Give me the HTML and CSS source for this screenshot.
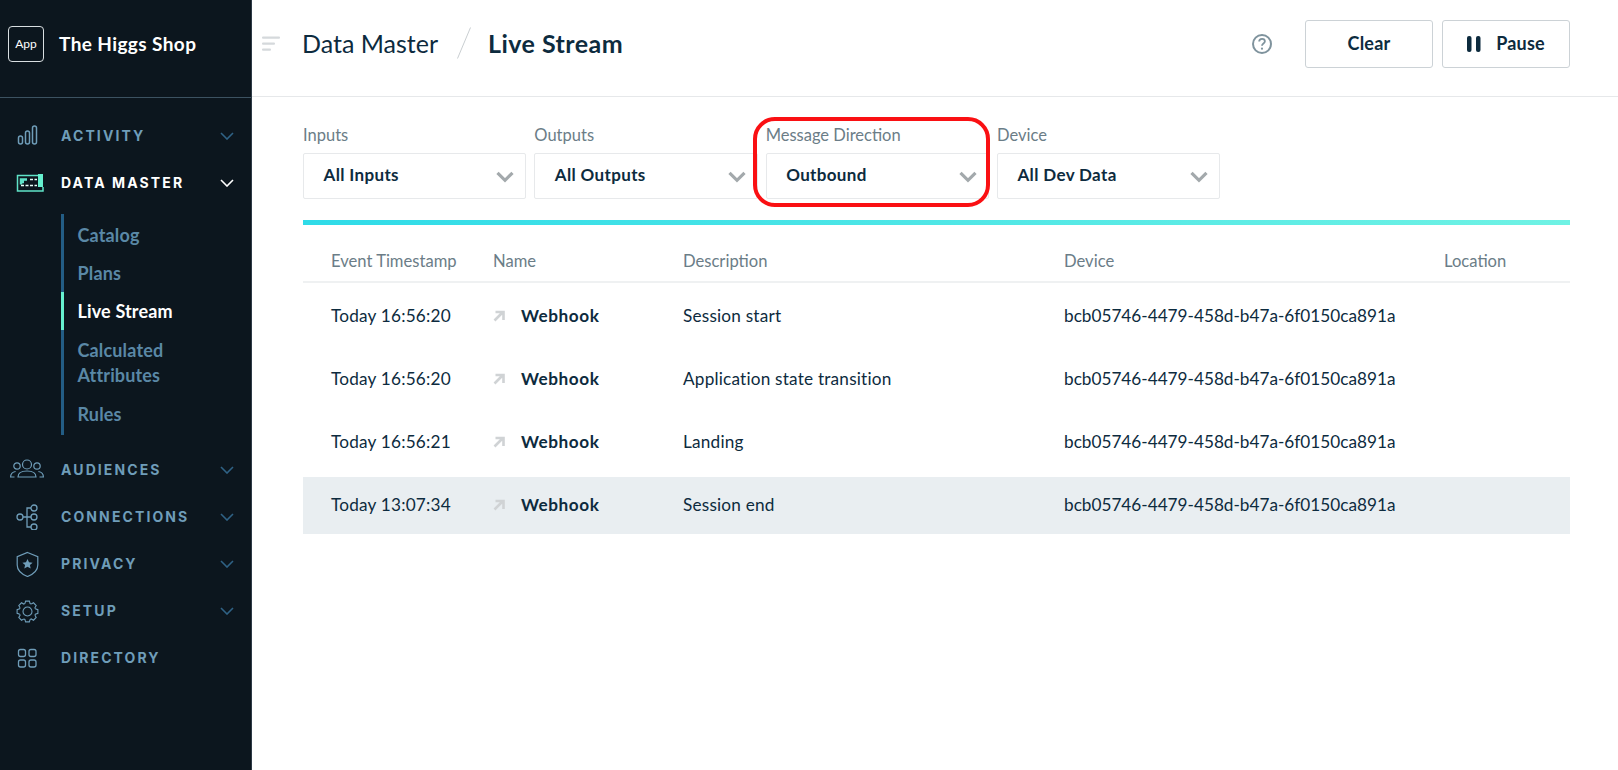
FILE: index.html
```html
<!DOCTYPE html>
<html lang="en">
<head>
  <meta charset="UTF-8">
  <meta name="viewport" content="width=device-width, initial-scale=1.0">
  <title>Live Stream</title>
  <link rel="stylesheet" href="styles.css">
</head>
<body>
  <div class="app">
    <aside class="sidebar">
      <div class="brand">
        <div class="app-badge">App</div>
        <div class="brand-name">The Higgs Shop</div>
      </div>
      <nav class="nav">
        <div class="nav-item">
          <svg class="nav-icon" viewBox="0 0 34 26" fill="none" stroke="currentColor" stroke-width="1.5"><rect x="8.500" y="13" width="4" height="8" rx="2"/><rect x="15.500" y="8" width="4" height="13" rx="2"/><rect x="22.500" y="3" width="4" height="18" rx="2"/></svg>
          <span class="nav-label">ACTIVITY</span>
          <svg class="chevron" viewBox="0 0 14 8" fill="none" stroke="currentColor" stroke-width="1.6"><path d="M1 1l6 6 6-6"/></svg>
        </div>
        <div class="nav-item active">
          <svg class="nav-icon" viewBox="0 0 34 26" fill="none" stroke="#5fe3c8" stroke-width="1.500"><path d="M28 5.500H7.500V21H33v-4"/><rect x="28" y="4" width="5" height="13" fill="#66f0cf" stroke="none"/><path d="M11 14.500V9.500h6M11 12h3" stroke-width="2.500"/><path d="M20 9.500h7M11 15.500h16" stroke="#e8fff9" stroke-dasharray="3 1.500"/></svg>
          <span class="nav-label">DATA MASTER</span>
          <svg class="chevron" viewBox="0 0 14 8" fill="none" stroke="currentColor" stroke-width="1.6"><path d="M1 1l6 6 6-6"/></svg>
        </div>
        <ul class="sub-nav">
          <li>Catalog</li>
          <li>Plans</li>
          <li class="current">Live Stream</li>
          <li class="two-line">Calculated<br>Attributes</li>
          <li>Rules</li>
        </ul>
        <div class="nav-item">
          <svg class="nav-icon" viewBox="0 0 34 26" fill="none" stroke="currentColor" stroke-width="1.200"><circle cx="17" cy="7.500" r="4.500"/><circle cx="7" cy="9" r="3.200"/><circle cx="27" cy="9" r="3.200"/><path d="M8 20c0-4 4-6 9-6s9 2 9 6z"/><path d="M4.500 20H.600c0-3 2-5 5-5.500M29.500 20h3.900c0-3-2-5-5-5.500"/></svg>
          <span class="nav-label">AUDIENCES</span>
          <svg class="chevron" viewBox="0 0 14 8" fill="none" stroke="currentColor" stroke-width="1.6"><path d="M1 1l6 6 6-6"/></svg>
        </div>
        <div class="nav-item">
          <svg class="nav-icon" viewBox="0 0 34 26" fill="none" stroke="currentColor" stroke-width="1.300"><circle cx="10" cy="13" r="3"/><circle cx="24" cy="4" r="3"/><circle cx="24" cy="13" r="3"/><circle cx="24" cy="23" r="3"/><path d="M13 13h8M21 4h-4v19h4"/></svg>
          <span class="nav-label">CONNECTIONS</span>
          <svg class="chevron" viewBox="0 0 14 8" fill="none" stroke="currentColor" stroke-width="1.6"><path d="M1 1l6 6 6-6"/></svg>
        </div>
        <div class="nav-item">
          <svg class="nav-icon" viewBox="0 0 34 26" fill="none" stroke="currentColor" stroke-width="1.200"><path d="M17.500 1.500L27.800 5.700V14c0 5-4 9-10.300 11.500C11.200 23 7.200 19 7.200 14V5.700z"/><path d="M17.500 8l1.500 3.300 3.600.4-2.700 2.400.8 3.500-3.200-1.800-3.200 1.800.8-3.500-2.700-2.400 3.600-.4z" fill="currentColor" stroke="none"/></svg>
          <span class="nav-label">PRIVACY</span>
          <svg class="chevron" viewBox="0 0 14 8" fill="none" stroke="currentColor" stroke-width="1.6"><path d="M1 1l6 6 6-6"/></svg>
        </div>
        <div class="nav-item">
          <svg class="nav-icon" viewBox="0 0 34 26" fill="none" stroke="currentColor" stroke-width="1.100">
            <defs><path id="gear-tooth" d="M-2.600-7.900L-1.900-10.400H1.900L2.600-7.900L3.750-7.420"/></defs>
            <g transform="translate(17.500 13.500)">
              <circle r="4.500"/>
              <use href="#gear-tooth"/>
              <use href="#gear-tooth" transform="rotate(45)"/>
              <use href="#gear-tooth" transform="rotate(90)"/>
              <use href="#gear-tooth" transform="rotate(135)"/>
              <use href="#gear-tooth" transform="rotate(180)"/>
              <use href="#gear-tooth" transform="rotate(225)"/>
              <use href="#gear-tooth" transform="rotate(270)"/>
              <use href="#gear-tooth" transform="rotate(315)"/>
            </g>
          </svg>
          <span class="nav-label">SETUP</span>
          <svg class="chevron" viewBox="0 0 14 8" fill="none" stroke="currentColor" stroke-width="1.6"><path d="M1 1l6 6 6-6"/></svg>
        </div>
        <div class="nav-item">
          <svg class="nav-icon" viewBox="0 0 34 26" fill="none" stroke="currentColor" stroke-width="1.300"><rect x="8.500" y="4.500" width="7" height="7" rx="2"/><rect x="19" y="4.500" width="7" height="7" rx="2"/><rect x="8.500" y="15" width="7" height="7" rx="2"/><rect x="19" y="15" width="7" height="7" rx="2"/></svg>
          <span class="nav-label">DIRECTORY</span>
        </div>
      </nav>
    </aside>

    <main class="main">
      <header class="topbar">
        <svg class="menu-icon" viewBox="0 0 18 14" fill="#d5d9dc"><rect y="0" width="18" height="2.200" rx="1"/><rect y="6" width="13" height="2.200" rx="1"/><rect y="12" width="9" height="2.200" rx="1"/></svg>
        <div class="crumb">Data Master</div>
        <svg class="crumb-slash" viewBox="0 0 14 32" fill="none" stroke="#c9ced1"><path d="M13.500 0.500L0.500 31.500"/></svg>
        <div class="crumb crumb-current">Live Stream</div>
        <svg class="help-icon" viewBox="0 0 22 22" fill="none" stroke="#7f939d" stroke-width="2"><circle cx="11" cy="11" r="9"/><path d="M8.200 8.600c0-1.700 1.200-2.800 2.900-2.800s2.800 1 2.800 2.500c0 2.300-2.900 2.200-2.900 4.500" stroke-width="1.800"/><circle cx="11" cy="15.700" r="1.100" fill="#7f939d" stroke="none"/></svg>
        <button class="btn btn-clear">Clear</button>
        <button class="btn">
          <svg class="pause-icon" viewBox="0 0 14 16" fill="#0d2b3e"><rect x="0" y="0" width="4.500" height="16" rx="2"/><rect x="9" y="0" width="4.500" height="16" rx="2"/></svg>
          Pause
        </button>
      </header>

      <section class="content">
        <div class="filters">
          <div class="filter">
            <label>Inputs</label>
            <div class="select"><span>All Inputs</span><svg class="select-arrow" viewBox="0 0 18 12" fill="none" stroke="#a3a9ac" stroke-width="3.200"><path d="M1.500 1.800L9 9.300l7.500-7.500"/></svg></div>
          </div>
          <div class="filter">
            <label>Outputs</label>
            <div class="select"><span>All Outputs</span><svg class="select-arrow" viewBox="0 0 18 12" fill="none" stroke="#a3a9ac" stroke-width="3.200"><path d="M1.500 1.800L9 9.300l7.500-7.500"/></svg></div>
          </div>
          <div class="filter">
            <label>Message Direction</label>
            <div class="select"><span>Outbound</span><svg class="select-arrow" viewBox="0 0 18 12" fill="none" stroke="#a3a9ac" stroke-width="3.200"><path d="M1.500 1.800L9 9.300l7.500-7.500"/></svg></div>
            <div class="highlight-box"></div>
          </div>
          <div class="filter">
            <label>Device</label>
            <div class="select"><span>All Dev Data</span><svg class="select-arrow" viewBox="0 0 18 12" fill="none" stroke="#a3a9ac" stroke-width="3.200"><path d="M1.500 1.800L9 9.300l7.500-7.500"/></svg></div>
          </div>
        </div>

        <div class="gradient-bar"></div>

        <div class="table">
          <div class="row head">
            <div>Event Timestamp</div>
            <div>Name</div>
            <div>Description</div>
            <div>Device</div>
            <div>Location</div>
          </div>
          <div class="row">
            <div>Today 16:56:20</div>
            <div class="name-cell"><svg class="arrow" viewBox="0 0 12 12" fill="none" stroke="#d0d3d5" stroke-width="2.600"><path d="M1.500 10.500L9.500 2.500M2.500 2h8v8"/></svg><b>Webhook</b></div>
            <div>Session start</div>
            <div class="device-cell">bcb05746-4479-458d-b47a-6f0150ca891a</div>
            <div></div>
          </div>
          <div class="row">
            <div>Today 16:56:20</div>
            <div class="name-cell"><svg class="arrow" viewBox="0 0 12 12" fill="none" stroke="#d0d3d5" stroke-width="2.600"><path d="M1.500 10.500L9.500 2.500M2.500 2h8v8"/></svg><b>Webhook</b></div>
            <div>Application state transition</div>
            <div class="device-cell">bcb05746-4479-458d-b47a-6f0150ca891a</div>
            <div></div>
          </div>
          <div class="row">
            <div>Today 16:56:21</div>
            <div class="name-cell"><svg class="arrow" viewBox="0 0 12 12" fill="none" stroke="#d0d3d5" stroke-width="2.600"><path d="M1.500 10.500L9.500 2.500M2.500 2h8v8"/></svg><b>Webhook</b></div>
            <div>Landing</div>
            <div class="device-cell">bcb05746-4479-458d-b47a-6f0150ca891a</div>
            <div></div>
          </div>
          <div class="row selected">
            <div>Today 13:07:34</div>
            <div class="name-cell"><svg class="arrow" viewBox="0 0 12 12" fill="none" stroke="#d0d3d5" stroke-width="2.600"><path d="M1.500 10.500L9.500 2.500M2.500 2h8v8"/></svg><b>Webhook</b></div>
            <div>Session end</div>
            <div class="device-cell">bcb05746-4479-458d-b47a-6f0150ca891a</div>
            <div></div>
          </div>
        </div>
      </section>
    </main>
  </div>
</body>
</html>
```

FILE: styles.css
```css
* {
  box-sizing: border-box;
}
html, body {
  margin: 0;
  height: 100%;
  overflow: hidden;
}
body {
  font-family: Lato, "Open Sans", sans-serif;
  background-color: #fff;
  color: #0d2b3e;
}
.app {
  display: flex;
  height: 770px;
}

/* sidebar */
.sidebar {
  width: 252px;
  flex: none;
  background-color: #0c161e;
  border-right: 1px solid #2e3b46;
}
.brand {
  display: flex;
  align-items: center;
  height: 98px;
  padding: 0 8px 10px;
  border-bottom: 1px solid #3c5261;
}
.app-badge {
  width: 36px;
  height: 36px;
  display: flex;
  align-items: center;
  justify-content: center;
  border: 1px solid #d9dee1;
  border-radius: 4px;
  color: #fff;
  font-size: 12px;
}
.brand-name {
  margin-left: 15px;
  color: #fff;
  font-size: 19px;
  font-weight: 700;
  letter-spacing: .4px;
}
.nav {
  padding-top: 14px;
}
.nav-item {
  display: flex;
  align-items: center;
  height: 47px;
  padding: 0 17px 0 10px;
  color: #6f9db9;
}
.nav-item.active {
  color: #fff;
}
.nav-icon {
  width: 34px;
  height: 26px;
  flex: none;
}
.nav-label {
  flex: 1;
  margin-left: 17px;
  font-family: Inter, Lato, sans-serif;
  font-size: 14px;
  font-weight: 700;
  letter-spacing: 2.1px;
}
.chevron {
  width: 14px;
  height: 8px;
  color: #2f6285;
}
.active .chevron {
  color: #fff;
}
.sub-nav {
  list-style: none;
  margin: 7.5px 0 11.5px 61px;
  padding: 2px 0;
  border-left: 3px solid #235d85;
  color: #5a88a6;
  font-size: 18px;
  font-weight: 700;
  letter-spacing: .15px;
  line-height: 25px;
}
.sub-nav li {
  padding: 7.5px 0 5.5px 13.5px;
}
.sub-nav .two-line {
  padding: 8.5px 0 6.5px 13.5px;
}
.sub-nav .current {
  margin-left: -3px;
  border-left: 3px solid #66f0cf;
  color: #fff;
}

/* header */
.main {
  flex: 1;
  min-width: 0;
}
.topbar {
  display: flex;
  align-items: center;
  height: 97px;
  padding: 0 48px 8px 10px;
  border-bottom: 1px solid #e6e8ea;
}
.menu-icon {
  width: 18px;
  height: 15px;
  margin: 0 22px 2px 0;
}
.crumb {
  margin-bottom: 2px;
  font-size: 25px;
}
.crumb-current {
  font-weight: 700;
  letter-spacing: .47px;
}
.crumb-slash {
  width: 14px;
  height: 32px;
  margin: 0 17px 2px 19px;
}
.help-icon {
  width: 22px;
  height: 22px;
  margin: 0 32px 0 auto;
}
.btn {
  display: flex;
  align-items: center;
  justify-content: center;
  width: 128px;
  height: 48px;
  padding: 0 0 2px;
  background: #fff;
  border: 1px solid #ccd2d6;
  border-radius: 3px;
  color: #0d2b3e;
  font-family: inherit;
  font-size: 18px;
  font-weight: 700;
  letter-spacing: .2px;
}
.btn-clear {
  margin-right: 9px;
}
.pause-icon {
  width: 14px;
  height: 16px;
  margin: 2px 15px 0 0;
}

/* filters */
.content {
  padding: 0 48px 0 51px;
}
.filters {
  display: flex;
  gap: 8px;
  padding-top: 27px;
}
.filter {
  position: relative;
  width: 223.33px;
}
.filter label {
  display: block;
  height: 29px;
  color: #6b7d87;
  font-size: 16.5px;
  line-height: 22px;
}
.select {
  display: flex;
  align-items: center;
  justify-content: space-between;
  height: 46px;
  padding: 0 11px 4px 19.5px;
  border: 1px solid #e7e9eb;
  border-radius: 2px;
  font-size: 17px;
  font-weight: 700;
  letter-spacing: .35px;
}
.select-arrow {
  width: 18px;
  height: 12px;
  margin-top: 6px;
}
.highlight-box {
  position: absolute;
  left: -13px;
  top: -7px;
  width: 237px;
  height: 90px;
  border: 4.5px solid #fa1013;
  border-radius: 22px;
}
.gradient-bar {
  height: 5px;
  margin-top: 21px;
  background: linear-gradient(to right, #2fdbe8, #6ff2e4);
}

/* table */
.table {
  font-size: 17.2px;
  letter-spacing: .2px;
}
.row {
  display: grid;
  grid-template-columns: 162px 190px 381px 380px 1fr;
  align-items: center;
  height: 57px;
  padding: 0 0 2px 28px;
  margin-bottom: 6px;
}
.row.head {
  height: 58px;
  margin-bottom: 5px;
  padding: 16px 0 0 28px;
  border-bottom: 2px solid #eff1f2;
  color: #6b7d87;
  font-size: 16.6px;
  letter-spacing: 0;
}
.row.selected {
  background-color: #e9eef1;
}
.device-cell {
  letter-spacing: 0;
}
.name-cell {
  display: flex;
  align-items: center;
}
.name-cell b {
  margin-left: 16px;
  letter-spacing: .55px;
}
.arrow {
  width: 12px;
  height: 12px;
}
```
